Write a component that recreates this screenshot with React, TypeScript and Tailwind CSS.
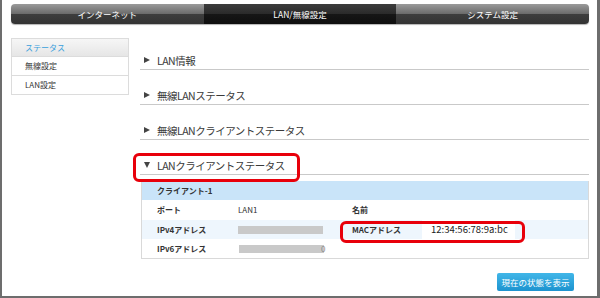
import React from "react";

const tabs = [
  { label: "インターネット", active: false },
  { label: "LAN/無線設定", active: true },
  { label: "システム設定", active: false },
];

const side = ["ステータス", "無線設定", "LAN設定"];

function Tri({ open }: { open?: boolean }) {
  return open ? (
    <span className="inline-block h-0 w-0 border-x-[3.5px] border-t-[6px] border-x-transparent border-t-[#444]" />
  ) : (
    <span className="inline-block h-0 w-0 border-y-[3.5px] border-l-[6px] border-y-transparent border-l-[#444]" />
  );
}

function Section({ title, open, first }: { title: string; open?: boolean; first?: boolean }) {
  return (
    <div
      className={`flex h-[20px] items-center gap-[7px] border-b border-[#c9c9c9] pl-[4px] text-[10.5px] tracking-[-0.5px] text-[#3a3a3a] ${
        first ? "mt-[12px]" : "mt-[15px]"
      }`}
    >
      <Tri open={open} />
      <span className="pt-[2px]">{title}</span>
    </div>
  );
}

export default function App() {
  return (
    <div
      className="relative h-[298px] w-[600px] overflow-hidden border-b-2 border-l-2 border-r-[3px] border-[#6d6d6d] bg-white pl-[9px] pr-[8px] pt-[4px]"
      style={{ fontFamily: '"Noto Sans CJK JP", "Liberation Sans", sans-serif' }}
    >
      {/* グローバルナビ */}
      <div className="flex h-[20px] overflow-hidden rounded-[4px] shadow-[0_1px_1px_rgba(0,0,0,0.3)]">
        {tabs.map((t) => (
          <div
            key={t.label}
            className={`flex flex-1 items-center justify-center text-[8.5px] text-white ${
              t.active
                ? "bg-[linear-gradient(to_bottom,#3c3c3c,#2a2a2a_50%,#161616_51%,#0e0e0e)]"
                : "bg-[linear-gradient(to_bottom,#9a9a9a,#6a6a6a_50%,#3d3d3d_51%,#333)]"
            }`}
          >
            {t.label}
          </div>
        ))}
      </div>

      <div className="mt-[14px] flex gap-[11px]">
        {/* サイドメニュー */}
        <div className="w-[118px] shrink-0">
          {side.map((s, i) => (
            <div
              key={s}
              className={`flex h-[19px] items-center border-x border-b border-[#dcdcdc] pl-[13px] text-[8px] ${
                i === 0
                  ? "border-t bg-[linear-gradient(to_bottom,#f6f6f6,#e6e6e6)] text-[#3aa0dc]"
                  : "text-[#333]"
              }`}
            >
              {s}
            </div>
          ))}
        </div>

        {/* メイン */}
        <div className="flex w-[449px] flex-col">
          <Section title="LAN情報" first />
          <Section title="無線LANステータス" />
          <Section title="無線LANクライアントステータス" />
          <Section title="LANクライアントステータス" open />

          <div className="ml-px mt-[6px] border-x border-b border-[#d9d9d9] text-[8px] font-bold text-[#333]">
            <div className="flex h-[19px] items-center bg-[#c9e4f9] pl-[15px]">クライアント-1</div>
            <div className="flex h-[20px] items-center">
              <div className="w-[81px] pl-[15px]">ポート</div>
              <div className="w-[115px] pl-[15px] font-normal">LAN1</div>
              <div className="pl-[14px]">名前</div>
            </div>
            <div className="flex h-[19px] items-center bg-[#eef6fd]">
              <div className="w-[81px] pl-[15px]">IPv4アドレス</div>
              <div className="w-[115px] pl-[15px]">
                <div className="h-[8px] w-[85px] bg-[#c9c9c9]" />
              </div>
              <div className="w-[84px] pl-[14px]">MACアドレス</div>
              <div className="flex h-full w-[93px] items-center bg-white pl-[9px] text-[9.5px] font-normal text-[#222]">
                12:34:56:78:9a:bc
              </div>
            </div>
            <div className="flex h-[19px] items-center">
              <div className="w-[81px] pl-[15px]">IPv6アドレス</div>
              <div className="flex items-center pl-[16px]">
                <div className="h-[8px] w-[85px] bg-[#c9c9c9]" />
                <span className="-ml-[3px] text-[8px] font-normal text-[#888]">0</span>
              </div>
            </div>
          </div>

          <div className="mr-[15px] mt-[14px] flex justify-end">
            <button
              type="button"
              className="flex h-[18px] w-[77px] items-center justify-center rounded-[2px] bg-[linear-gradient(to_bottom,#41b6e8,#1c93cf)] text-[8.5px] text-white"
            >
              現在の状態を表示
            </button>
          </div>
        </div>
      </div>

      {/* 注釈の赤枠 */}
      <div className="pointer-events-none absolute left-[131px] top-[153px] h-[29px] w-[167px] rounded-[6px] border-[3px] border-[#e8000b]" />
      <div className="pointer-events-none absolute left-[338px] top-[221px] h-[22px] w-[185px] rounded-[6px] border-[3px] border-[#e8000b]" />
    </div>
  );
}
